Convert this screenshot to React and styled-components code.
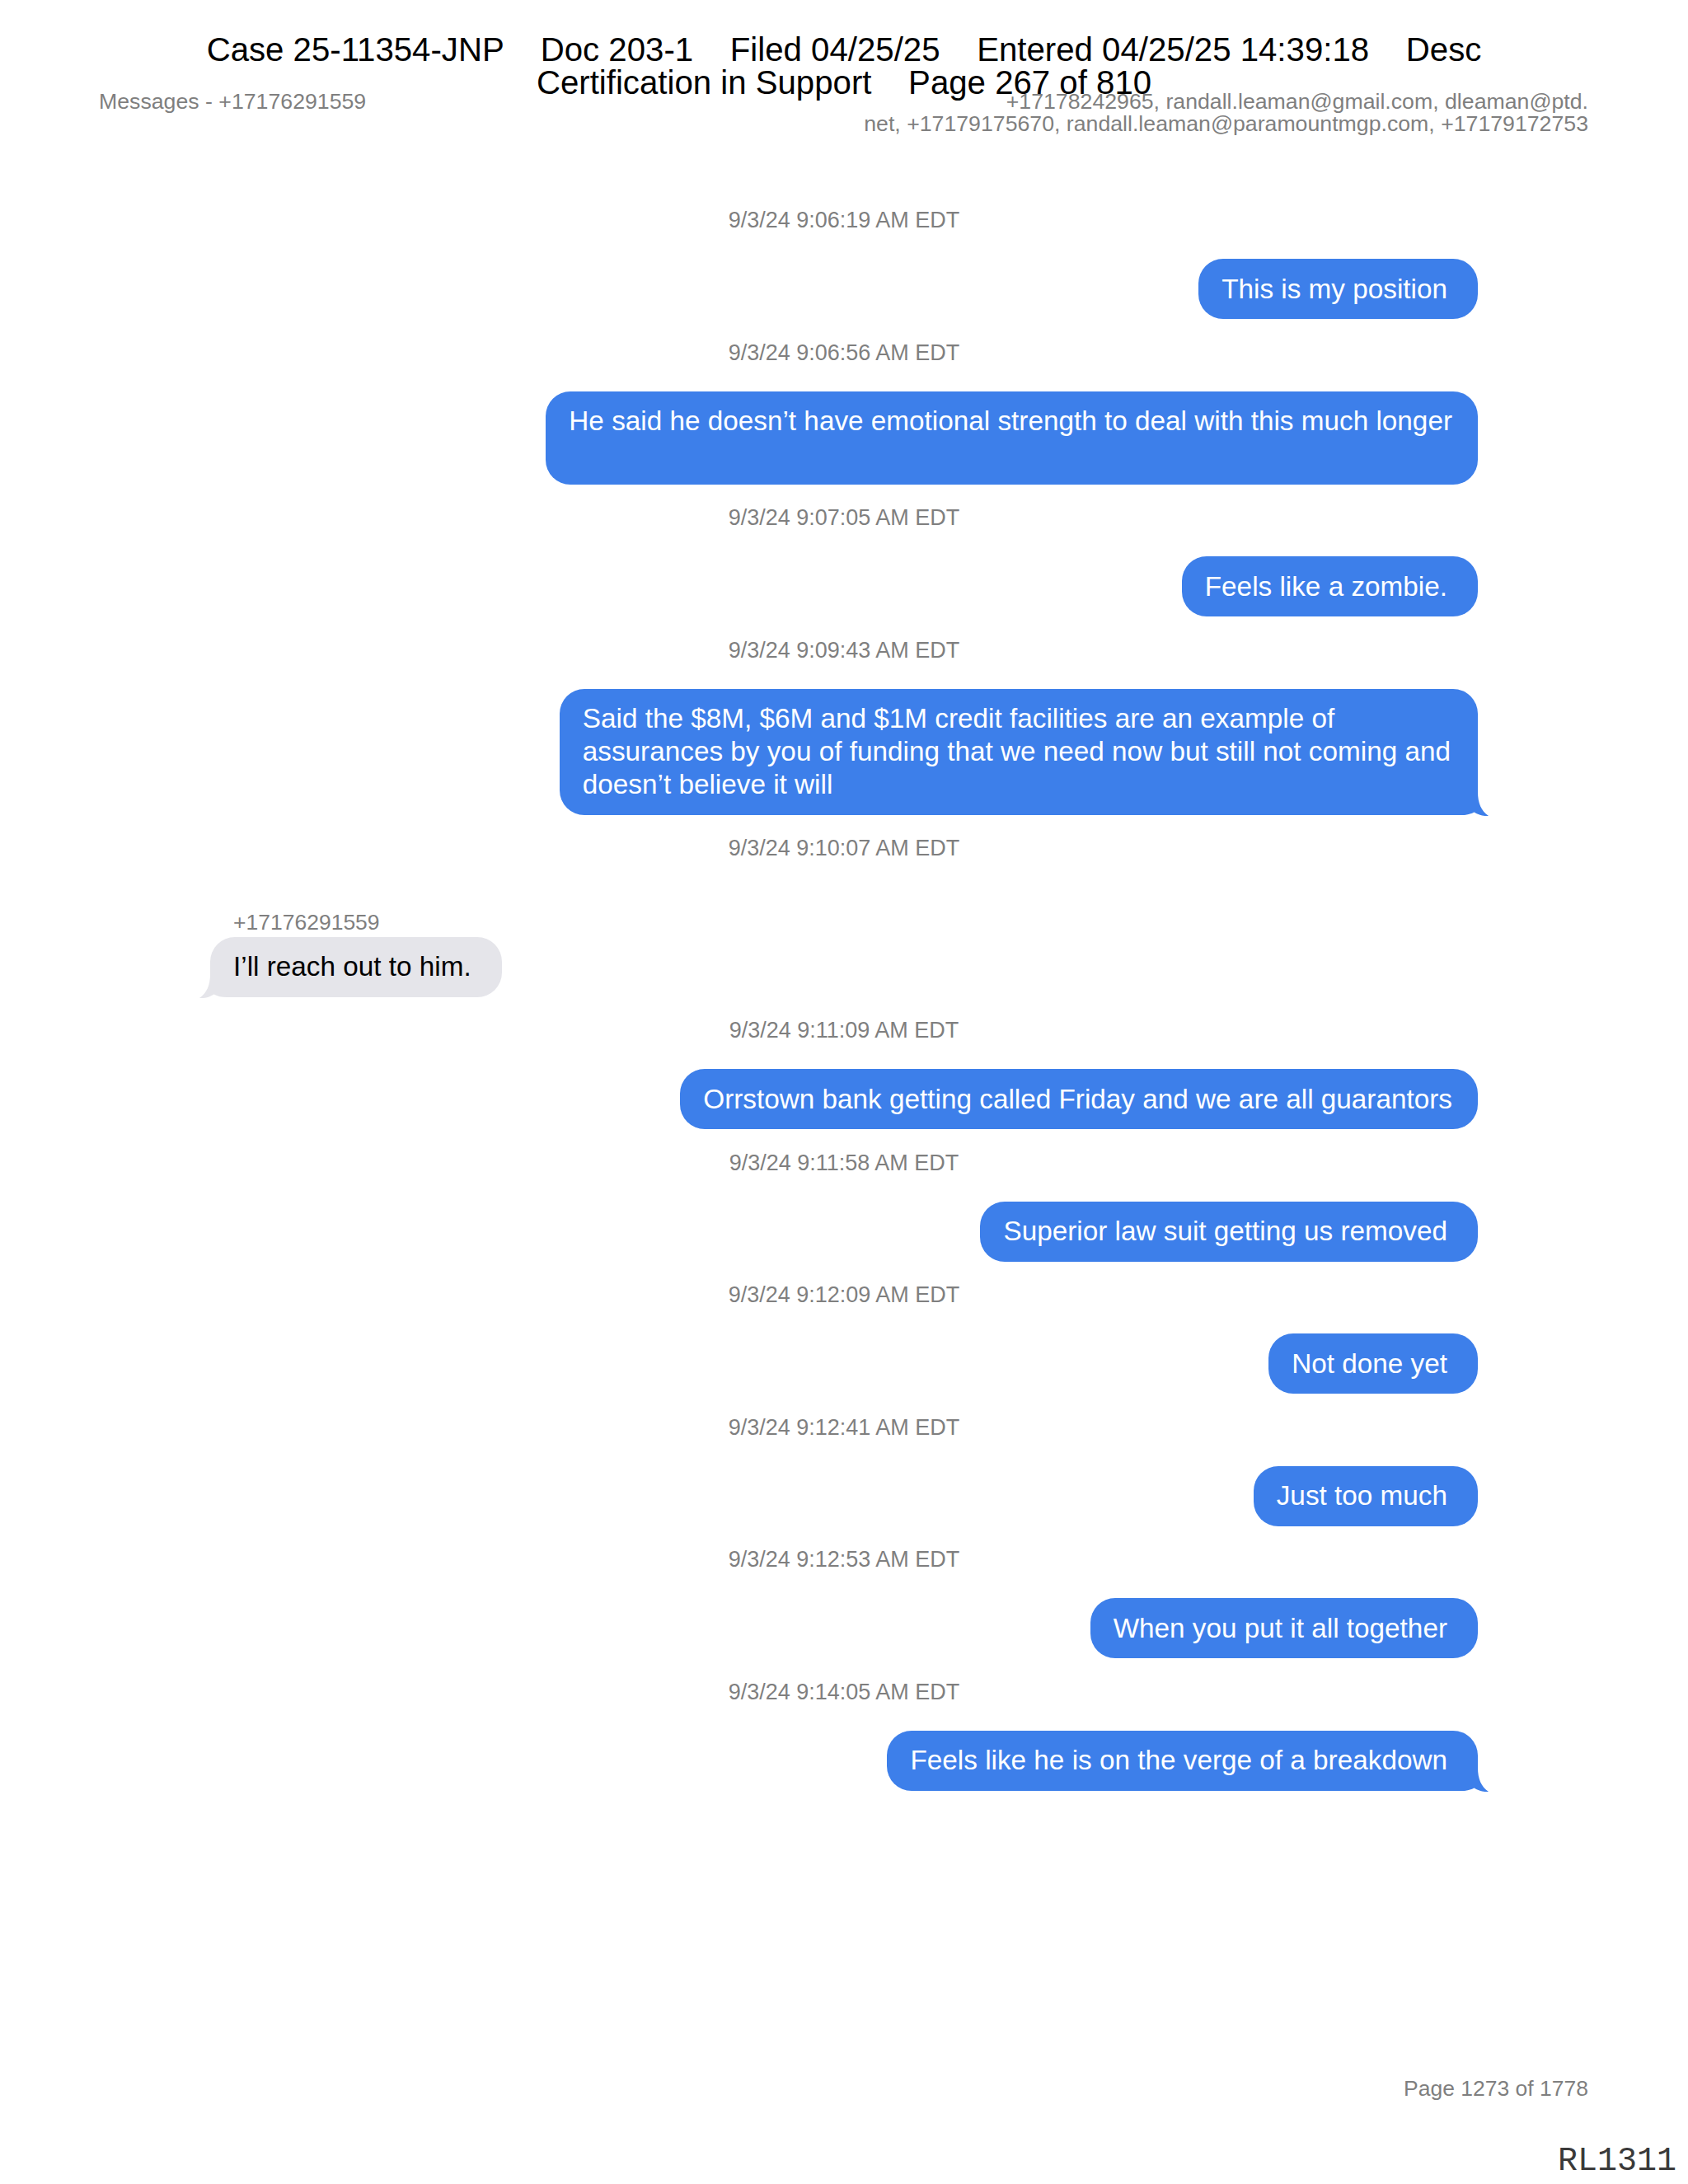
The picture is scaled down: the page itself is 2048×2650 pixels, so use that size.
import React from "react";
import styled, { createGlobalStyle } from "styled-components";

const Global = createGlobalStyle`
  html, body { margin: 0; padding: 0; background: #ffffff; }
  body { font-family: "Liberation Sans", Arial, sans-serif; }
`;

const Page = styled.div`
  position: relative;
  width: 2048px;
  min-height: 2650px;
  display: flex;
  flex-direction: column;
  background: #fff;
  font-family: "Liberation Sans", Arial, sans-serif;
`;

const CourtStamp = styled.div`
  position: absolute;
  top: 41px;
  left: 0;
  right: 0;
  text-align: center;
  font-size: 40.2px;
  line-height: 40px;
  color: #000;
  white-space: pre;
  z-index: 2;
`;

const Meta = styled.header`
  display: flex;
  justify-content: space-between;
  align-items: flex-start;
  padding: 110px 121px 0 120px;
  font-size: 26.7px;
  line-height: 27px;
  color: #7f7f7f;
`;

const MetaRight = styled.div`
  text-align: right;
`;

const Conversation = styled.main`
  display: flex;
  flex-direction: column;
  padding: 88px 255px 0;
`;

const Group = styled.section`
  display: flex;
  flex-direction: column;
  margin-bottom: 25.5px;
`;

const Stamp = styled.div`
  align-self: center;
  font-size: 27px;
  line-height: 30px;
  color: #7f7f7f;
  margin-bottom: 32px;
  white-space: nowrap;
`;

const Sender = styled.div`
  font-size: 26.5px;
  line-height: 30px;
  color: #7f7f7f;
  padding: 28px 0 0 28px;
  margin-bottom: 2.5px;
`;

const Row = styled.div`
  display: flex;
  justify-content: ${(p) => (p.$out ? "flex-end" : "flex-start")};
`;

const Bubble = styled.div`
  position: relative;
  box-sizing: border-box;
  max-width: 1135px;
  padding: 16.5px ${(p) => p.$padRight ?? 37}px 16.5px 28px;
  border-radius: 30px;
  background: ${(p) => (p.$out ? "#3d7fea" : "#e5e5ea")};
  color: ${(p) => (p.$out ? "#ffffff" : "#000000")};
  font-size: 33.3px;
  line-height: 40px;
`;

const Line = styled.span`
  display: block;
  min-height: 40px;
  white-space: nowrap;
`;

const Tail = styled.svg`
  position: absolute;
  bottom: -1px;
  ${(p) => (p.$out ? "right: -17px;" : "left: -17px; transform: scaleX(-1);")}
  width: 47px;
  height: 33px;
`;

const Footer = styled.footer`
  margin-top: auto;
  display: flex;
  flex-direction: column;
  align-items: flex-end;
`;

const PageNo = styled.div`
  font-size: 26.5px;
  line-height: 30px;
  color: #7f7f7f;
  margin-right: 121px;
  margin-bottom: 51px;
`;

const Bates = styled.div`
  font-family: "Liberation Mono", "Courier New", monospace;
  font-size: 40px;
  line-height: 46px;
  color: #3a3a3a;
  margin-right: 14px;
  margin-bottom: 4px;
`;

const TailShape = ({ out }) => (
  <Tail $out={out} viewBox="0 0 47 33" aria-hidden="true">
    <path
      d="M0 0 H30 V4 C30 17 34 27 43 33 C37 33.5 31 32 25.5 28.5 C21 31 16 32 10 32 H0 Z"
      fill={out ? "#3d7fea" : "#e5e5ea"}
    />
  </Tail>
);

const messages = [
  { time: "9/3/24 9:06:19 AM EDT", out: true, lines: ["This is my position"] },
  {
    time: "9/3/24 9:06:56 AM EDT",
    out: true,
    lines: ["He said he doesn\u2019t have emotional strength to deal with this much longer", ""],
    padRight: 31,
  },
  { time: "9/3/24 9:07:05 AM EDT", out: true, lines: ["Feels like a zombie."] },
  {
    time: "9/3/24 9:09:43 AM EDT",
    out: true,
    tail: true,
    padRight: 33,
    lines: [
      "Said the $8M, $6M and $1M credit facilities are an example of",
      "assurances by you of funding that we need now but still not coming and",
      "doesn\u2019t believe it will",
    ],
  },
  {
    time: "9/3/24 9:10:07 AM EDT",
    out: false,
    tail: true,
    sender: "+17176291559",
    lines: ["I\u2019ll reach out to him."],
  },
  {
    time: "9/3/24 9:11:09 AM EDT",
    out: true,
    padRight: 31,
    lines: ["Orrstown bank getting called Friday and we are all guarantors"],
  },
  { time: "9/3/24 9:11:58 AM EDT", out: true, lines: ["Superior law suit getting us removed"] },
  { time: "9/3/24 9:12:09 AM EDT", out: true, lines: ["Not done yet"] },
  { time: "9/3/24 9:12:41 AM EDT", out: true, lines: ["Just too much"] },
  { time: "9/3/24 9:12:53 AM EDT", out: true, lines: ["When you put it all together"] },
  {
    time: "9/3/24 9:14:05 AM EDT",
    out: true,
    tail: true,
    lines: ["Feels like he is on the verge of a breakdown"],
  },
];

export default function App() {
  return (
    <>
      <Global />
      <Page>
        <CourtStamp>
          {"Case 25-11354-JNP    Doc 203-1    Filed 04/25/25    Entered 04/25/25 14:39:18    Desc\nCertification in Support    Page 267 of 810"}
        </CourtStamp>
        <Meta>
          <div>Messages - +17176291559</div>
          <MetaRight>
            +17178242965, randall.leaman@gmail.com, dleaman@ptd.
            <br />
            net, +17179175670, randall.leaman@paramountmgp.com, +17179172753
          </MetaRight>
        </Meta>
        <Conversation>
          {messages.map((m, i) => (
            <Group key={i}>
              <Stamp>{m.time}</Stamp>
              {m.sender && <Sender>{m.sender}</Sender>}
              <Row $out={m.out}>
                <Bubble $out={m.out} $padRight={m.padRight}>
                  {m.lines.map((l, j) => (
                    <Line key={j}>{l}</Line>
                  ))}
                  {m.tail && <TailShape out={m.out} />}
                </Bubble>
              </Row>
            </Group>
          ))}
        </Conversation>
        <Footer>
          <PageNo>Page 1273 of 1778</PageNo>
          <Bates>RL1311</Bates>
        </Footer>
      </Page>
    </>
  );
}
